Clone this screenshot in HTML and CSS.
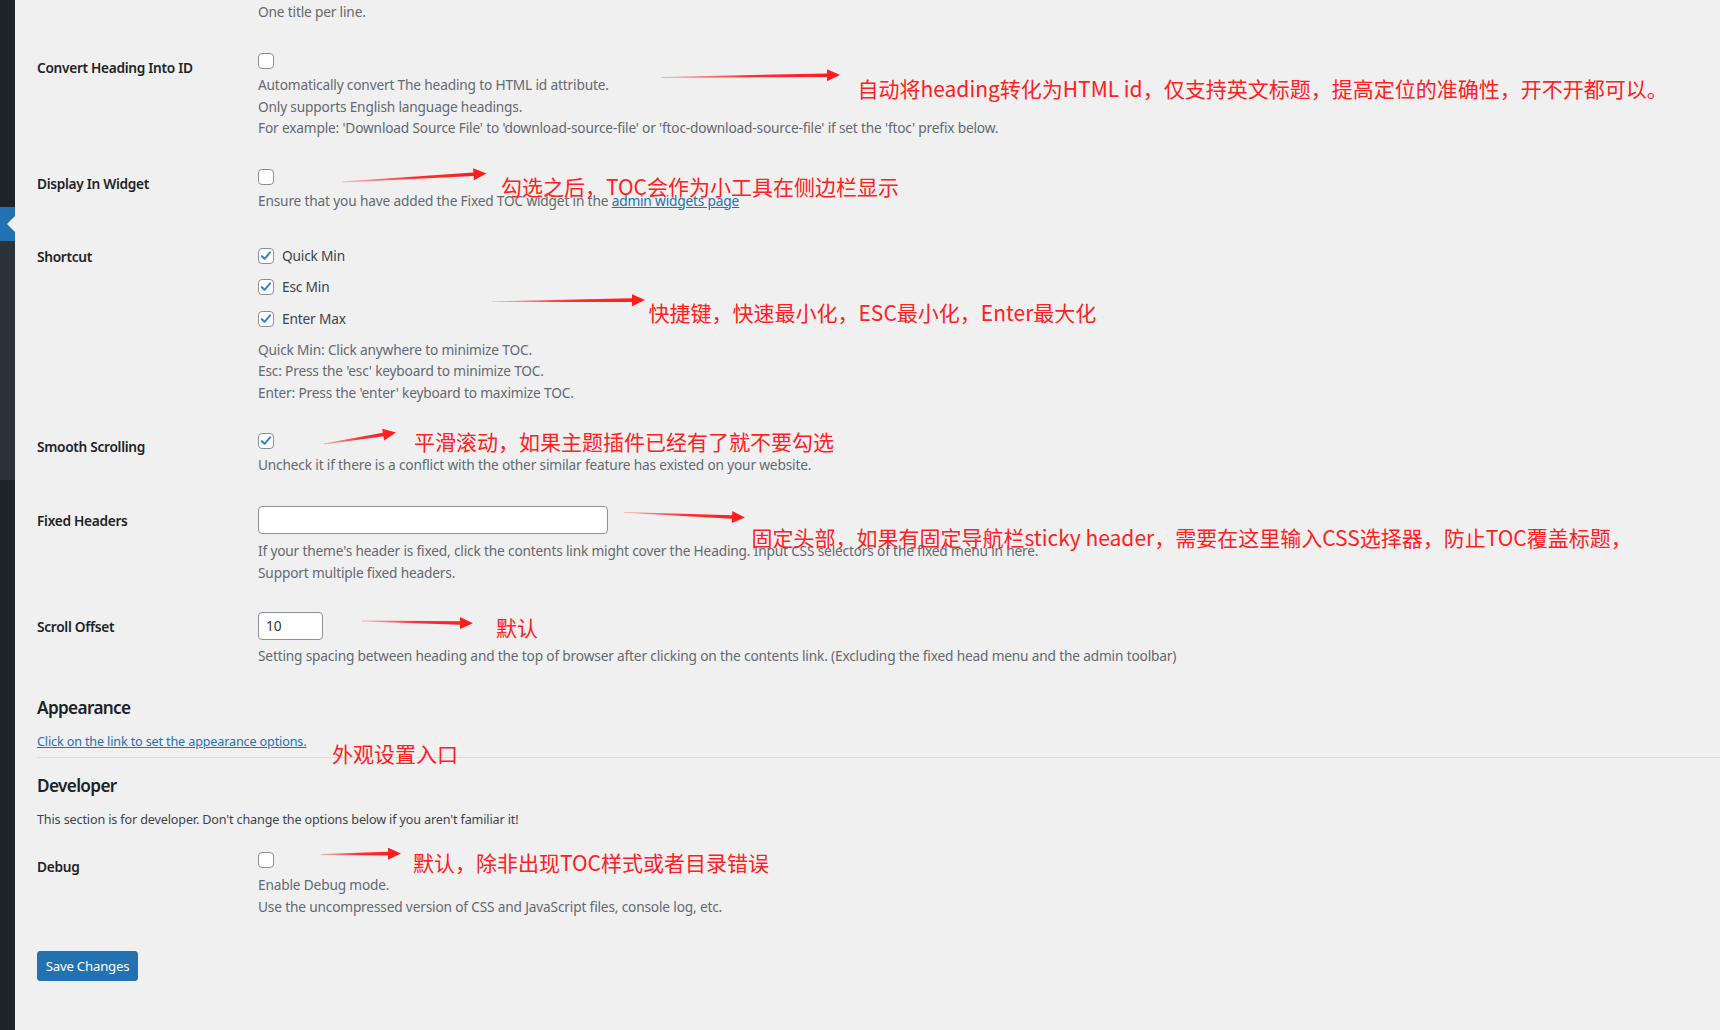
FILE: index.html
```html
<!DOCTYPE html>
<html lang="zh-CN">
<head>
<meta charset="utf-8">
<title>Fixed TOC Settings</title>
<link rel="stylesheet" href="styles.css">
</head>
<body>
<div class="layout">
  <aside class="adminmenu">
    <div class="menu-top"></div>
    <div class="menu-current"><span class="menu-arrow"></span></div>
    <div class="menu-sub"></div>
    <div class="menu-rest"></div>
  </aside>
  <main class="content">
    <div class="row row-first">
      <div class="label"></div>
      <div class="field"><p class="desc">One title per line.</p></div>
    </div>

    <div class="row r-convert">
      <div class="label">Convert Heading Into ID</div>
      <div class="field">
        <span class="cb"></span>
        <p class="desc">Automatically convert The heading to HTML id attribute.<br>Only supports English language headings.<br>For example: 'Download Source File' to 'download-source-file' or 'ftoc-download-source-file' if set the 'ftoc' prefix below.</p>
      </div>
    </div>

    <div class="row r-widget">
      <div class="label">Display In Widget</div>
      <div class="field">
        <span class="cb"></span>
        <p class="desc">Ensure that you have added the Fixed TOC widget in the <a href="#" class="link">admin widgets page</a></p>
      </div>
    </div>

    <div class="row r-shortcut">
      <div class="label label-tight">Shortcut</div>
      <div class="field">
        <div class="check-list">
          <label class="check-item"><span class="cb checked"><svg viewBox="0 0 16 16" width="14" height="14"><path d="M3.2 8.2 L6.4 11.2 L12.6 3.9" fill="none" stroke="#3582c4" stroke-width="2.3" stroke-linecap="round" stroke-linejoin="round"/></svg></span>Quick Min</label>
          <label class="check-item"><span class="cb checked"><svg viewBox="0 0 16 16" width="14" height="14"><path d="M3.2 8.2 L6.4 11.2 L12.6 3.9" fill="none" stroke="#3582c4" stroke-width="2.3" stroke-linecap="round" stroke-linejoin="round"/></svg></span>Esc Min</label>
          <label class="check-item"><span class="cb checked"><svg viewBox="0 0 16 16" width="14" height="14"><path d="M3.2 8.2 L6.4 11.2 L12.6 3.9" fill="none" stroke="#3582c4" stroke-width="2.3" stroke-linecap="round" stroke-linejoin="round"/></svg></span>Enter Max</label>
        </div>
        <p class="desc desc-list">Quick Min: Click anywhere to minimize TOC.<br>Esc: Press the 'esc' keyboard to minimize TOC.<br>Enter: Press the 'enter' keyboard to maximize TOC.</p>
      </div>
    </div>

    <div class="row r-smooth">
      <div class="label label-smooth">Smooth Scrolling</div>
      <div class="field">
        <span class="cb checked"><svg viewBox="0 0 16 16" width="14" height="14"><path d="M3.2 8.2 L6.4 11.2 L12.6 3.9" fill="none" stroke="#3582c4" stroke-width="2.3" stroke-linecap="round" stroke-linejoin="round"/></svg></span>
        <p class="desc">Uncheck it if there is a conflict with the other similar feature has existed on your website.</p>
      </div>
    </div>

    <div class="row r-fixed">
      <div class="label">Fixed Headers</div>
      <div class="field">
        <input class="text-input wide" type="text" value="">
        <p class="desc desc-input">If your theme's header is fixed, click the contents link might cover the Heading. Input CSS selectors of the fixed menu in here.<br>Support multiple fixed headers.</p>
      </div>
    </div>

    <div class="row r-offset">
      <div class="label">Scroll Offset</div>
      <div class="field">
        <input class="text-input small" type="text" value="10">
        <p class="desc desc-input2">Setting spacing between heading and the top of browser after clicking on the contents link. (Excluding the fixed head menu and the admin toolbar)</p>
      </div>
    </div>

    <h2 class="section-title s-appearance">Appearance</h2>
    <p class="section-text s-link"><a href="#" class="link">Click on the link to set the appearance options.</a></p>
    <hr class="divider">
    <h2 class="section-title s-developer">Developer</h2>
    <p class="section-text s-devtext">This section is for developer. Don't change the options below if you aren't familiar it!</p>

    <div class="row r-debug">
      <div class="label">Debug</div>
      <div class="field">
        <span class="cb"></span>
        <p class="desc desc-debug">Enable Debug mode.<br>Use the uncompressed version of CSS and JavaScript files, console log, etc.</p>
      </div>
    </div>

    <button class="button-primary" type="button">Save Changes</button>
  </main>
</div>

<div class="annotations">
  <svg class="arrows" width="1720" height="1030" viewBox="0 0 1720 1030">
    <defs>
      <linearGradient id="g1" gradientUnits="userSpaceOnUse" x1="661" y1="0" x2="840" y2="0"><stop offset="0" stop-color="#ff1a1a" stop-opacity="0.25"/><stop offset="0.5" stop-color="#ff1a1a" stop-opacity="0.9"/><stop offset="1" stop-color="#ff1a1a"/></linearGradient>
      <linearGradient id="g2" gradientUnits="userSpaceOnUse" x1="342" y1="0" x2="486" y2="0"><stop offset="0" stop-color="#ff1a1a" stop-opacity="0.25"/><stop offset="0.5" stop-color="#ff1a1a" stop-opacity="0.9"/><stop offset="1" stop-color="#ff1a1a"/></linearGradient>
      <linearGradient id="g3" gradientUnits="userSpaceOnUse" x1="492" y1="0" x2="645" y2="0"><stop offset="0" stop-color="#ff1a1a" stop-opacity="0.25"/><stop offset="0.5" stop-color="#ff1a1a" stop-opacity="0.9"/><stop offset="1" stop-color="#ff1a1a"/></linearGradient>
      <linearGradient id="g4" gradientUnits="userSpaceOnUse" x1="324" y1="0" x2="396" y2="0"><stop offset="0" stop-color="#ff1a1a" stop-opacity="0.3"/><stop offset="0.5" stop-color="#ff1a1a" stop-opacity="0.9"/><stop offset="1" stop-color="#ff1a1a"/></linearGradient>
      <linearGradient id="g5" gradientUnits="userSpaceOnUse" x1="624" y1="0" x2="745" y2="0"><stop offset="0" stop-color="#ff1a1a" stop-opacity="0.25"/><stop offset="0.5" stop-color="#ff1a1a" stop-opacity="0.9"/><stop offset="1" stop-color="#ff1a1a"/></linearGradient>
      <linearGradient id="g6" gradientUnits="userSpaceOnUse" x1="362" y1="0" x2="473" y2="0"><stop offset="0" stop-color="#ff1a1a" stop-opacity="0.25"/><stop offset="0.5" stop-color="#ff1a1a" stop-opacity="0.9"/><stop offset="1" stop-color="#ff1a1a"/></linearGradient>
      <linearGradient id="g7" gradientUnits="userSpaceOnUse" x1="321" y1="0" x2="401" y2="0"><stop offset="0" stop-color="#ff1a1a" stop-opacity="0.3"/><stop offset="0.5" stop-color="#ff1a1a" stop-opacity="0.9"/><stop offset="1" stop-color="#ff1a1a"/></linearGradient>
    </defs>
    <polygon fill="url(#g1)" points="661,77.1 827,73.4 827,69.2 840,75 827,81.2 827,77 661,77.9"/>
    <polygon fill="url(#g2)" points="341.98,181.6 473.4,172.46 473.15,168.27 486.5,173.5 473.85,180.25 473.6,176.06 342.02,182.4"/>
    <polygon fill="url(#g3)" points="492,301.3 632,298.35 632,294.15 645,300 632,306.15 632,301.95 492,302.1"/>
    <polygon fill="url(#g4)" points="323.94,443.6 382.88,432.77 382.21,428.63 396,432.5 384.11,440.48 383.44,436.33 324.06,444.4"/>
    <polygon fill="url(#g5)" points="624.02,511.9 732.09,515.14 732.27,510.95 745,517.5 731.75,522.93 731.93,518.74 623.98,512.7"/>
    <polygon fill="url(#g6)" points="362,620.6 460,621.23 460,617.03 473,623.3 460,629.03 460,624.83 362,621.4"/>
    <polygon fill="url(#g7)" points="321,854.1 388,851.86 388,847.66 401,853.5 388,859.66 388,855.46 321,854.9"/>
  </svg>
  <span class="note n1">自动将heading转化为HTML id，仅支持英文标题，提高定位的准确性，开不开都可以。</span>
  <span class="note n2">勾选之后，TOC会作为小工具在侧边栏显示</span>
  <span class="note n3">快捷键，快速最小化，ESC最小化，Enter最大化</span>
  <span class="note n4">平滑滚动，如果主题插件已经有了就不要勾选</span>
  <span class="note n5">固定头部，如果有固定导航栏sticky header，需要在这里输入CSS选择器，防止TOC覆盖标题，</span>
  <span class="note n6">默认</span>
  <span class="note n7">外观设置入口</span>
  <span class="note n8">默认，除非出现TOC样式或者目录错误</span>
</div>
</body>
</html>
```

FILE: styles.css
```css
html, body {
  margin: 0;
  padding: 0;
  background: #f0f0f1;
}

body {
  position: relative;
  width: 1720px;
  height: 1030px;
  overflow: hidden;
  font-family: "Noto Sans", "Open Sans", sans-serif;
}

.layout {
  display: flex;
  min-height: 1030px;
}

/* Admin menu strip */
.adminmenu {
  width: 15px;
  flex: 0 0 15px;
  display: flex;
  flex-direction: column;
  background: #1d2327;
}
.menu-top { height: 207px; background: #1d2327; }
.menu-current {
  height: 34px;
  background: #2271b1;
  display: flex;
  align-items: center;
  justify-content: flex-end;
}
.menu-arrow {
  width: 0;
  height: 0;
  border-top: 8px solid transparent;
  border-bottom: 8px solid transparent;
  border-right: 8px solid #f0f0f1;
}
.menu-sub { height: 239px; background: #2c3338; }
.menu-rest { flex: 1; background: #1d2327; }

/* Content */
.content {
  flex: 1;
  padding: 1px 0 0 22px;
  font-size: 13.7px;
  letter-spacing: -0.17px;
  line-height: 21.5px;
  color: #3c434a;
}

.row {
  display: grid;
  grid-template-columns: 221px 1fr;
}

.label {
  font-weight: 600;
  color: #1d2327;
  line-height: 19px;
  padding-top: 5px;
  letter-spacing: -0.3px;
}
.label-tight { padding-top: 0; line-height: 17px; }
.label-smooth { padding-top: 3.5px; }

.field {
  display: flex;
  flex-direction: column;
  align-items: flex-start;
}

.desc {
  margin: 0;
  color: #646970;
  white-space: nowrap;
}
.cb + .desc { margin-top: 5.25px; }
.desc-list { margin-top: 12.25px; }
.desc-input { margin-top: 6px; }
.desc-input2 { margin-top: 5.25px; }
.field .desc-debug { margin-top: 6px; }

.link {
  color: #2271b1;
  text-decoration: underline;
}

.cb {
  display: flex;
  align-items: center;
  justify-content: center;
  width: 16px;
  height: 16px;
  box-sizing: border-box;
  border: 1px solid #8c8f94;
  border-radius: 4px;
  background: #ffffff;
  flex: 0 0 16px;
}

.check-list {
  display: flex;
  flex-direction: column;
  gap: 15.5px;
}
.check-item {
  display: flex;
  align-items: center;
  gap: 8px;
  height: 16px;
  color: #3c434a;
}

.text-input {
  box-sizing: border-box;
  height: 28.5px;
  border: 1px solid #8c8f94;
  border-radius: 4px;
  background: #ffffff;
  font-family: "Noto Sans", sans-serif;
  font-size: 13.7px;
  color: #2c3338;
  padding: 0 7px;
  margin: 0;
  outline: none;
}
.text-input.wide { width: 350px; }
.text-input.small { width: 64.5px; }

/* Row spacing */
.r-convert { margin-top: 30.5px; }
.r-widget { margin-top: 29.75px; }
.r-shortcut { margin-top: 36.25px; }
.r-smooth { margin-top: 29.75px; }
.r-fixed { margin-top: 29.75px; }
.r-offset { margin-top: 28.5px; }

.section-title {
  margin: 0;
  font-size: 17.2px;
  font-weight: 600;
  line-height: 24px;
  letter-spacing: -0.65px;
  color: #1d2327;
}
.s-appearance { margin-top: 29.25px; }
.s-developer { margin-top: 16px; }

.section-text {
  margin: 0;
  color: #3c434a;
  font-size: 12.6px;
  letter-spacing: -0.14px;
}
.s-link { margin-top: 11.25px; }
.s-devtext { margin-top: 11.25px; }

.divider {
  border: 0;
  border-top: 1px solid #dcdcde;
  height: 0;
  margin: 4.25px 0 0 0;
}

.r-debug { margin-top: 21.5px; }

.button-primary {
  display: block;
  margin-top: 33.75px;
  height: 30px;
  width: 101px;
  padding: 0;
  background: #2271b1;
  border: 1px solid #2271b1;
  border-radius: 3px;
  color: #ffffff;
  font-family: "Noto Sans", sans-serif;
  font-size: 13.2px;
  letter-spacing: -0.2px;
  line-height: 28px;
  text-align: center;
}

/* Annotation overlay */
.annotations {
  position: absolute;
  left: 0;
  top: 0;
  width: 1720px;
  height: 1030px;
  pointer-events: none;
}
.arrows {
  position: absolute;
  left: 0;
  top: 0;
}
.note {
  position: absolute;
  white-space: nowrap;
  font-family: "Noto Sans CJK SC", "Noto Sans", sans-serif;
  font-size: 21px;
  line-height: 21px;
  color: #ff2020;
}
.n1 { left: 857.5px; top: 77.8px; }
.n2 { left: 501px; top: 176.3px; }
.n3 { left: 648.5px; top: 302.3px; }
.n4 { left: 414px; top: 430.8px; }
.n5 { left: 751.5px; top: 526.8px; }
.n6 { left: 496px; top: 617.3px; }
.n7 { left: 332px; top: 743.3px; }
.n8 { left: 413px; top: 852.1px; }
```
